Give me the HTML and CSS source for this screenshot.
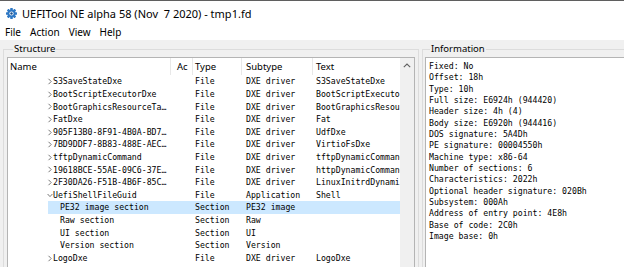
FILE: index.html
```html
<!DOCTYPE html>
<html>
<head>
<meta charset="utf-8">
<link rel="stylesheet" href="styles.css">
</head>
<body>
<div class="window">
  <div class="titlebar">
    <svg class="appicon" width="11" height="11" viewBox="0 0 22 22">
      <g fill="#2f78c4">
        <circle cx="11" cy="11" r="8"/>
        <rect x="8.5" y="0" width="5" height="5" rx="1"/>
        <rect x="8.5" y="17" width="5" height="5" rx="1"/>
        <rect x="0" y="8.5" width="5" height="5" rx="1"/>
        <rect x="17" y="8.5" width="5" height="5" rx="1"/>
        <rect x="8.5" y="0" width="5" height="5" rx="1" transform="rotate(45 11 11)"/>
        <rect x="8.5" y="17" width="5" height="5" rx="1" transform="rotate(45 11 11)"/>
        <rect x="0" y="8.5" width="5" height="5" rx="1" transform="rotate(45 11 11)"/>
        <rect x="17" y="8.5" width="5" height="5" rx="1" transform="rotate(45 11 11)"/>
      </g>
      <circle cx="11" cy="11" r="4.2" fill="#ffffff"/>
      <circle cx="11" cy="11" r="2.4" fill="#1d4f8a"/>
    </svg>
    <span class="title">UEFITool NE alpha 58 (Nov  7 2020) - tmp1.fd</span>
  </div>
  <div class="menubar">
    <span class="menu">File</span>
    <span class="menu">Action</span>
    <span class="menu">View</span>
    <span class="menu">Help</span>
  </div>
  <div class="main">
    <section class="group structure">
      <div class="group-label">Structure</div>
      <div class="tree">
        <div class="tree-content">
          <div class="row header">
            <div class="c c-name">Name</div>
            <div class="c c-ac">Ac</div>
            <div class="c c-type">Type</div>
            <div class="c c-sub">Subtype</div>
            <div class="c c-text">Text</div>
          </div>
          <div class="row">
            <div class="c c-name lvl2"><span class="twisty"><svg width="6" height="7" viewBox="0 0 6 7"><path d="M1.5 0.8 L4.2 3.5 L1.5 6.2" fill="none" stroke="#6a6a6a" stroke-width="0.9"/></svg></span>S3SaveStateDxe</div>
            <div class="c c-ac"></div><div class="c c-type">File</div><div class="c c-sub">DXE driver</div><div class="c c-text">S3SaveStateDxe</div>
          </div>
          <div class="row">
            <div class="c c-name lvl2"><span class="twisty"><svg width="6" height="7" viewBox="0 0 6 7"><path d="M1.5 0.8 L4.2 3.5 L1.5 6.2" fill="none" stroke="#6a6a6a" stroke-width="0.9"/></svg></span>BootScriptExecutorDxe</div>
            <div class="c c-ac"></div><div class="c c-type">File</div><div class="c c-sub">DXE driver</div><div class="c c-text">BootScriptExecutorDxe</div>
          </div>
          <div class="row">
            <div class="c c-name lvl2"><span class="twisty"><svg width="6" height="7" viewBox="0 0 6 7"><path d="M1.5 0.8 L4.2 3.5 L1.5 6.2" fill="none" stroke="#6a6a6a" stroke-width="0.9"/></svg></span>BootGraphicsResourceTa…</div>
            <div class="c c-ac"></div><div class="c c-type">File</div><div class="c c-sub">DXE driver</div><div class="c c-text">BootGraphicsResourceTableDxe</div>
          </div>
          <div class="row">
            <div class="c c-name lvl2"><span class="twisty"><svg width="6" height="7" viewBox="0 0 6 7"><path d="M1.5 0.8 L4.2 3.5 L1.5 6.2" fill="none" stroke="#6a6a6a" stroke-width="0.9"/></svg></span>FatDxe</div>
            <div class="c c-ac"></div><div class="c c-type">File</div><div class="c c-sub">DXE driver</div><div class="c c-text">Fat</div>
          </div>
          <div class="row">
            <div class="c c-name lvl2"><span class="twisty"><svg width="6" height="7" viewBox="0 0 6 7"><path d="M1.5 0.8 L4.2 3.5 L1.5 6.2" fill="none" stroke="#6a6a6a" stroke-width="0.9"/></svg></span>905F13B0-8F91-4B0A-BD7…</div>
            <div class="c c-ac"></div><div class="c c-type">File</div><div class="c c-sub">DXE driver</div><div class="c c-text">UdfDxe</div>
          </div>
          <div class="row">
            <div class="c c-name lvl2"><span class="twisty"><svg width="6" height="7" viewBox="0 0 6 7"><path d="M1.5 0.8 L4.2 3.5 L1.5 6.2" fill="none" stroke="#6a6a6a" stroke-width="0.9"/></svg></span>7BD9DDF7-8B83-488E-AEC…</div>
            <div class="c c-ac"></div><div class="c c-type">File</div><div class="c c-sub">DXE driver</div><div class="c c-text">VirtioFsDxe</div>
          </div>
          <div class="row">
            <div class="c c-name lvl2"><span class="twisty"><svg width="6" height="7" viewBox="0 0 6 7"><path d="M1.5 0.8 L4.2 3.5 L1.5 6.2" fill="none" stroke="#6a6a6a" stroke-width="0.9"/></svg></span>tftpDynamicCommand</div>
            <div class="c c-ac"></div><div class="c c-type">File</div><div class="c c-sub">DXE driver</div><div class="c c-text">tftpDynamicCommand</div>
          </div>
          <div class="row">
            <div class="c c-name lvl2"><span class="twisty"><svg width="6" height="7" viewBox="0 0 6 7"><path d="M1.5 0.8 L4.2 3.5 L1.5 6.2" fill="none" stroke="#6a6a6a" stroke-width="0.9"/></svg></span>19618BCE-55AE-09C6-37E…</div>
            <div class="c c-ac"></div><div class="c c-type">File</div><div class="c c-sub">DXE driver</div><div class="c c-text">httpDynamicCommand</div>
          </div>
          <div class="row">
            <div class="c c-name lvl2"><span class="twisty"><svg width="6" height="7" viewBox="0 0 6 7"><path d="M1.5 0.8 L4.2 3.5 L1.5 6.2" fill="none" stroke="#6a6a6a" stroke-width="0.9"/></svg></span>2F30DA26-F51B-4B6F-85C…</div>
            <div class="c c-ac"></div><div class="c c-type">File</div><div class="c c-sub">DXE driver</div><div class="c c-text">LinuxInitrdDynamicShellCommand</div>
          </div>
          <div class="row">
            <div class="c c-name lvl2"><span class="twisty"><svg width="6" height="7" viewBox="0 0 6 7"><path d="M0.6 2 L3 4.6 L5.4 2" fill="none" stroke="#6a6a6a" stroke-width="0.9"/></svg></span>UefiShellFileGuid</div>
            <div class="c c-ac"></div><div class="c c-type">File</div><div class="c c-sub">Application</div><div class="c c-text">Shell</div>
          </div>
          <div class="row selected">
            <div class="c c-name lvl3">PE32 image section</div>
            <div class="c c-ac"></div><div class="c c-type">Section</div><div class="c c-sub">PE32 image</div><div class="c c-text"></div>
          </div>
          <div class="row">
            <div class="c c-name lvl3">Raw section</div>
            <div class="c c-ac"></div><div class="c c-type">Section</div><div class="c c-sub">Raw</div><div class="c c-text"></div>
          </div>
          <div class="row">
            <div class="c c-name lvl3">UI section</div>
            <div class="c c-ac"></div><div class="c c-type">Section</div><div class="c c-sub">UI</div><div class="c c-text"></div>
          </div>
          <div class="row">
            <div class="c c-name lvl3">Version section</div>
            <div class="c c-ac"></div><div class="c c-type">Section</div><div class="c c-sub">Version</div><div class="c c-text"></div>
          </div>
          <div class="row">
            <div class="c c-name lvl2"><span class="twisty"><svg width="6" height="7" viewBox="0 0 6 7"><path d="M1.5 0.8 L4.2 3.5 L1.5 6.2" fill="none" stroke="#6a6a6a" stroke-width="0.9"/></svg></span>LogoDxe</div>
            <div class="c c-ac"></div><div class="c c-type">File</div><div class="c c-sub">DXE driver</div><div class="c c-text">LogoDxe</div>
          </div>
        </div>
        <div class="vscroll">
          <svg class="up" width="14" height="14" viewBox="0 0 14 14"><path d="M3.8 8.2 L7 5 L10.2 8.2" fill="none" stroke="#606060" stroke-width="1.1"/></svg>
        </div>
      </div>
    </section>
    <section class="group info">
      <div class="group-label">Information</div>
      <div class="infobox">
        <div>Fixed: No</div>
        <div>Offset: 18h</div>
        <div>Type: 10h</div>
        <div>Full size: E6924h (944420)</div>
        <div>Header size: 4h (4)</div>
        <div>Body size: E6920h (944416)</div>
        <div>DOS signature: 5A4Dh</div>
        <div>PE signature: 00004550h</div>
        <div>Machine type: x86-64</div>
        <div>Number of sections: 6</div>
        <div>Characteristics: 2022h</div>
        <div>Optional header signature: 020Bh</div>
        <div>Subsystem: 000Ah</div>
        <div>Address of entry point: 4E8h</div>
        <div>Base of code: 2C0h</div>
        <div>Image base: 0h</div>
      </div>
    </section>
  </div>
</div>
</body>
</html>
```

FILE: styles.css
```css
html, body {
  margin: 0;
  padding: 0;
}
body {
  width: 624px;
  height: 267px;
  overflow: hidden;
  background: #f0f0f0;
  font-family: "Noto Sans", "Open Sans", sans-serif;
  color: #000;
}
.window {
  display: flex;
  flex-direction: column;
  height: 267px;
}
.titlebar {
  height: 24px;
  border-top: 1px solid #5f5f5f;
  background: #fff;
  display: flex;
  align-items: center;
  padding-left: 6px;
  gap: 5px;
  font-size: 11px;
}
.title {
  white-space: pre;
  color: #000;
}
.appicon {
  display: block;
  margin-top: 1px;
}
.menubar {
  height: 15px;
  background: #fff;
  display: flex;
  align-items: center;
  padding-left: 5px;
  gap: 9px;
  font-size: 10px;
  line-height: 15px;
}
.main {
  flex: 1;
  display: flex;
  min-height: 0;
  background: #f0f0f0;
  padding-top: 9px;
  padding-left: 3px;
  gap: 3px;
}
.group {
  border: 1px solid #dcdcdc;
  border-bottom: none;
  display: flex;
  flex-direction: column;
  min-height: 0;
}
.structure {
  width: 408px;
  padding: 0 3px;
}
.info {
  flex: 1;
  padding: 0 0 0 2px;
  border-right: none;
}
.group-label {
  font-size: 9.5px;
  line-height: 12px;
  margin-top: -7px;
  margin-left: 6px;
  padding: 0 1px;
  background: #f0f0f0;
  align-self: flex-start;
  color: #000;
}
.info .group-label {
  margin-left: 5px;
}
.tree {
  margin-top: 2px;
  flex: 1;
  min-height: 0;
  display: flex;
  background: #fff;
  border: 1px solid #b4b4b4;
  border-bottom: none;
  overflow: hidden;
}
.tree-content {
  width: 392px;
  display: flex;
  flex-direction: column;
}
.row {
  display: grid;
  grid-template-columns: 163px 22px 49px 71px 87px;
  height: 12.6px;
  font-family: "DejaVu Sans Mono", monospace;
  font-size: 8.2px;
  line-height: 12.6px;
  white-space: nowrap;
}
.row.header {
  height: 17.4px;
  line-height: 18px;
  font-family: "Noto Sans", "Open Sans", sans-serif;
  font-size: 9.5px;
}
.row.header .c {
  border-right: 1px solid #e8e8e8;
}
.row.header .c-text {
  border-right: none;
}
.c {
  overflow: hidden;
  white-space: nowrap;
}
.c-name { padding-left: 2px; }
.c-ac { padding-left: 6px; }
.c-type { padding-left: 2px; }
.c-sub { padding-left: 4px; }
.c-text { padding-left: 3px; }
.row .c-name.lvl2 {
  padding-left: 39px;
  display: flex;
  align-items: center;
}
.row .c-name.lvl3 {
  padding-left: 52px;
}
.twisty {
  width: 6px;
  display: flex;
  align-items: center;
  justify-content: flex-start;
  height: 12.6px;
}
.twisty svg {
  display: block;
}
.row.selected {
  background: linear-gradient(to right, transparent 40px, #cce8ff 40px);
}
.vscroll {
  width: 14px;
  background: #f0f0f0;
  display: flex;
  flex-direction: column;
}
.vscroll .up {
  display: block;
  margin-top: 1px;
}
.infobox {
  margin-top: 2px;
  flex: 1;
  background: #fff;
  border: 1px solid #b4b4b4;
  border-right: none;
  border-bottom: none;
  padding: 3px 0 0 3px;
  font-family: "DejaVu Sans Mono", monospace;
  font-size: 8.2px;
  line-height: 11.33px;
  white-space: nowrap;
}
```
